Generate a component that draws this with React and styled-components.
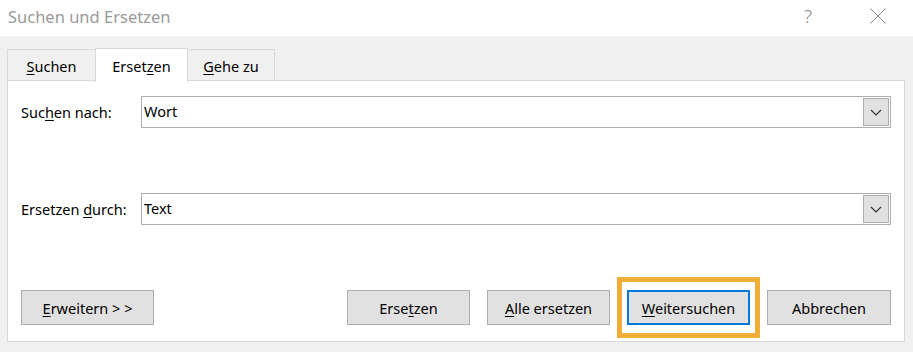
import styled, { createGlobalStyle } from "styled-components";

const GlobalStyle = createGlobalStyle`
  html, body {
    margin: 0;
    padding: 0;
    background: #f0f0f0;
    font-family: "Noto Sans", "Open Sans", sans-serif;
    font-size: 14px;
    color: #000;
  }
`;

const Window = styled.div`
  width: 913px;
  height: 352px;
  display: flex;
  flex-direction: column;
  background: #f0f0f0;
  overflow: hidden;
`;

const TitleBar = styled.div`
  height: 36px;
  flex-shrink: 0;
  background: #fff;
  display: flex;
  align-items: center;
  padding-left: 8px;
  padding-bottom: 4px;
  box-sizing: border-box;
`;

const Title = styled.div`
  flex: 1;
  font-size: 16.5px;
  color: #9a9a9a;
`;

const TitleButton = styled.div`
  width: 70px;
  height: 32px;
  display: flex;
  align-items: center;
  justify-content: center;
  color: #8a8a8a;
  font-size: 19px;
  font-weight: 300;
`;

const Body = styled.div`
  padding: 12px 8px 0 7px;
  display: flex;
  flex-direction: column;
`;

const TabStrip = styled.div`
  display: flex;
  align-items: flex-end;
  height: 33px;
  position: relative;
  z-index: 1;
  margin-bottom: -1px;
`;

const Tab = styled.div`
  box-sizing: border-box;
  height: ${(p) => (p.$active ? "34px" : "32px")};
  width: ${(p) => p.$w}px;
  margin-bottom: ${(p) => (p.$active ? "-1px" : "0")};
  display: flex;
  align-items: center;
  justify-content: center;
  padding-top: ${(p) => (p.$active ? "0" : "2px")};
  background: ${(p) => (p.$active ? "#fff" : "#f0f0f0")};
  border: 1px solid #d9d9d9;
  border-bottom: ${(p) => (p.$active ? "none" : "1px solid #d9d9d9")};
  border-left: ${(p) => (p.$noLeft ? "none" : "1px solid #d9d9d9")};
  border-right: ${(p) => (p.$noRight ? "none" : "1px solid #d9d9d9")};
  font-size: 14.5px;
`;

const Panel = styled.div`
  box-sizing: border-box;
  width: 898px;
  height: 262px;
  background: #fff;
  border: 1px solid #d9d9d9;
  padding: 15px 13px 16px 13px;
  display: flex;
  flex-direction: column;
`;

const FieldRow = styled.div`
  display: flex;
  align-items: center;
  height: 32px;
  margin-bottom: ${(p) => p.$gap || 0}px;
`;

const Label = styled.label`
  width: 120px;
  font-size: 14.5px;
`;

const Combo = styled.div`
  flex: 1;
  height: 32px;
  box-sizing: border-box;
  border: 1px solid #adadad;
  display: flex;
  align-items: stretch;
  background: #fff;
`;

const ComboText = styled.div`
  flex: 1;
  padding: 2px 0 0 2px;
  font-size: 14.5px;
  line-height: 24px;
`;

const ComboButton = styled.div`
  width: 26px;
  margin: 1px;
  box-sizing: border-box;
  border: 1px solid #adadad;
  background: #e1e1e1;
  display: flex;
  align-items: center;
  justify-content: center;
`;

const ButtonRow = styled.div`
  margin-top: auto;
  display: flex;
  align-items: center;
  gap: 17px;
`;

const Spacer = styled.div`
  flex: 1;
`;

const Button = styled.button`
  box-sizing: border-box;
  width: ${(p) => p.$w || 123}px;
  height: 35px;
  background: #e1e1e1;
  border: ${(p) => (p.$focused ? "2px solid #0078d7" : "1px solid #adadad")};
  font-family: inherit;
  font-size: 14.5px;
  color: #000;
  padding: 0;
  position: relative;
`;

const FocusRing = styled.span`
  position: absolute;
  left: -12px;
  right: -12px;
  top: -15px;
  bottom: -15px;
  border: 5px solid #f0ae36;
  pointer-events: none;
`;

const U = styled.span`
  text-decoration: underline;
  text-underline-offset: 2px;
`;

function Chevron() {
  return (
    <svg width="12" height="7" viewBox="0 0 12 7">
      <path d="M1 1 L6 6 L11 1" fill="none" stroke="#333" strokeWidth="1.2" />
    </svg>
  );
}

function CloseIcon() {
  return (
    <svg width="16" height="16" viewBox="0 0 16 16">
      <path d="M0.5 0.5 L15.5 15.5 M15.5 0.5 L0.5 15.5" stroke="#8a8a8a" strokeWidth="1" />
    </svg>
  );
}

export default function App() {
  return (
    <>
      <GlobalStyle />
      <Window>
        <TitleBar>
          <Title>Suchen und Ersetzen</Title>
          <TitleButton>?</TitleButton>
          <TitleButton>
            <CloseIcon />
          </TitleButton>
        </TitleBar>
        <Body>
          <TabStrip>
            <Tab $w={88} $noRight>
              <span><U>S</U>uchen</span>
            </Tab>
            <Tab $w={93} $active>
              <span>Erset<U>z</U>en</span>
            </Tab>
            <Tab $w={87} $noLeft>
              <span><U>G</U>ehe zu</span>
            </Tab>
          </TabStrip>
          <Panel>
            <FieldRow $gap={65}>
              <Label>Suc<U>h</U>en nach:</Label>
              <Combo>
                <ComboText>Wort</ComboText>
                <ComboButton>
                  <Chevron />
                </ComboButton>
              </Combo>
            </FieldRow>
            <FieldRow>
              <Label>Ersetzen <U>d</U>urch:</Label>
              <Combo>
                <ComboText>Text</ComboText>
                <ComboButton>
                  <Chevron />
                </ComboButton>
              </Combo>
            </FieldRow>
            <ButtonRow>
              <Button $w={133}>
                <U>E</U>rweitern &gt; &gt;
              </Button>
              <Spacer />
              <Button>
                Erse<U>t</U>zen
              </Button>
              <Button>
                <U>A</U>lle ersetzen
              </Button>
              <Button $focused>
                <U>W</U>eitersuchen
                <FocusRing />
              </Button>
              <Button $w={124}>Abbrechen</Button>
            </ButtonRow>
          </Panel>
        </Body>
      </Window>
    </>
  );
}
